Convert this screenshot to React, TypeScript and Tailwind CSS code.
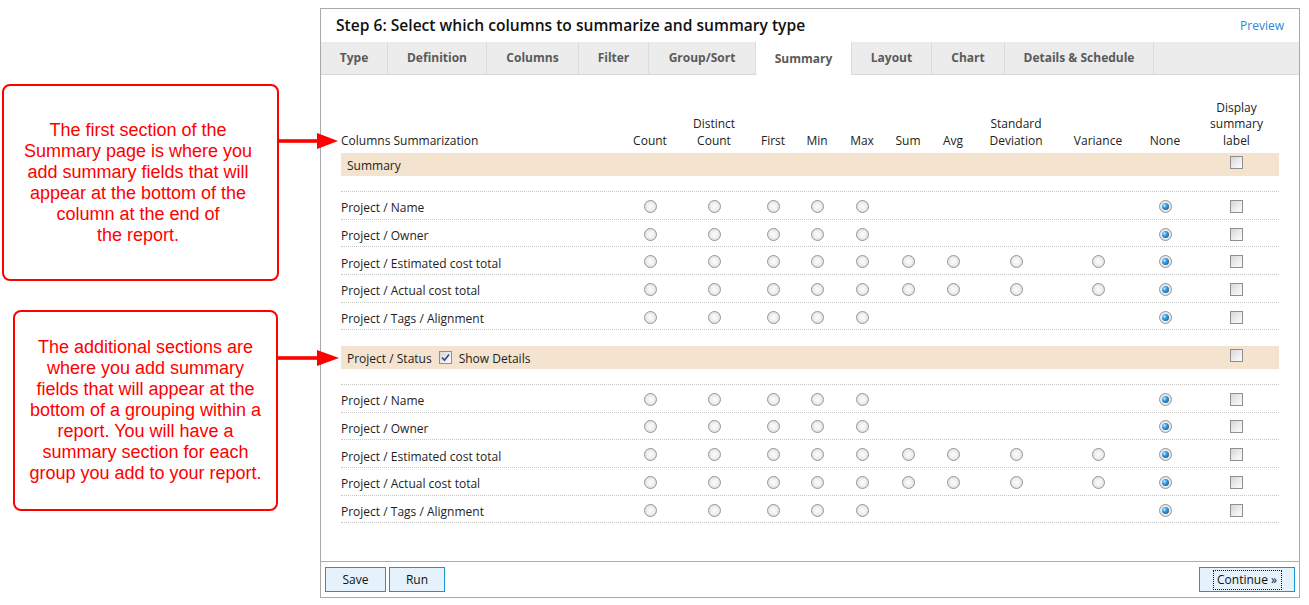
import React from "react";

const GRID =
  "grid grid-cols-[285px_48px_80px_38px_50px_40px_52px_38px_88px_76px_58px_85px]";

type RowDef = { label: string; full: boolean };

const ROWS: RowDef[] = [
  { label: "Project / Name", full: false },
  { label: "Project / Owner", full: false },
  { label: "Project / Estimated cost total", full: true },
  { label: "Project / Actual cost total", full: true },
  { label: "Project / Tags / Alignment", full: false },
];

const TABS: { label: string; cls: string; active?: boolean }[] = [
  { label: "Type", cls: "w-[67px]" },
  { label: "Definition", cls: "w-[99px]" },
  { label: "Columns", cls: "w-[92px]" },
  { label: "Filter", cls: "w-[70px]" },
  { label: "Group/Sort", cls: "w-[107px]" },
  { label: "Summary", cls: "w-[96px]", active: true },
  { label: "Layout", cls: "w-[80px]" },
  { label: "Chart", cls: "w-[73px]" },
  { label: "Details & Schedule", cls: "w-[149px]" },
];

function Radio({ checked }: { checked?: boolean }) {
  return (
    <span className="flex h-[13px] w-[13px] items-center justify-center rounded-full border border-[#959595] bg-[radial-gradient(circle,#fdfdfd_0%,#f0f0f0_45%,#d2d2d2_100%)]">
      {checked && (
        <span className="h-[7px] w-[7px] rounded-full bg-[radial-gradient(circle_at_35%_35%,#bfe6ff_0%,#3096da_40%,#0b4a80_100%)]" />
      )}
    </span>
  );
}

function Check({ checked }: { checked?: boolean }) {
  return (
    <span className="flex h-[13px] w-[13px] items-center justify-center border border-[#8f8f8f] bg-[linear-gradient(135deg,#d6d6d6_0%,#efefef_60%,#fbfbfb_100%)]">
      {checked && (
        <svg width="11" height="11" viewBox="0 0 11 11">
          <path
            d="M2 5.5 L4.5 8.2 L9 2.5"
            fill="none"
            stroke="#3a4a94"
            strokeWidth="1.7"
          />
        </svg>
      )}
    </span>
  );
}

function DataRow({ row }: { row: RowDef }) {
  return (
    <div
      className={`${GRID} h-[27.7px] items-center border-b border-dotted border-[#c6c6c6]`}
    >
      <span className="pt-[6px]">{row.label}</span>
      {Array.from({ length: 10 }).map((_, i) => {
        const show = i < 5 || i === 9 || row.full;
        return (
          <div key={i} className="flex justify-center pt-[2px]">
            {show && <Radio checked={i === 9} />}
          </div>
        );
      })}
      <div className="flex justify-center pt-[2px]">
        <Check />
      </div>
    </div>
  );
}

function Arrow({ width, base }: { width: number; base: number }) {
  return (
    <svg width={width} height="16" viewBox={`0 0 ${width} 16`}>
      <rect x="0" y="6.2" width={base + 2} height="3.6" fill="#ff0000" />
      <polygon points={`${base},0 ${width},8 ${base},16`} fill="#ff0000" />
    </svg>
  );
}

export default function App() {
  return (
    <div className="flex h-[605px] w-[1309px] bg-white font-['Open_Sans',sans-serif] text-[12px] text-[#1e1e1e]">
      {/* Annotation column */}
      <div className="w-[320px] shrink-0 font-['Liberation_Sans',Arial,sans-serif] text-[18px] leading-[21px] text-[#ff0000]">
        <div className="relative ml-[2px] mt-[84px] flex h-[197px] w-[277px] items-center justify-center rounded-[8px] border-2 border-[#ff0000] pr-[5px] text-center">
          <p>
            The first section of the
            <br />
            Summary page is where you
            <br />
            add summary fields that will
            <br />
            appear at the bottom of the
            <br />
            column at the end of
            <br />
            the report.
          </p>
          <div className="absolute left-full top-[47px] flex">
            <Arrow width={61} base={40} />
          </div>
        </div>
        <div className="relative ml-[13px] mt-[29px] flex h-[201px] w-[265px] items-center justify-center rounded-[8px] border-2 border-[#ff0000] text-center">
          <p>
            The additional sections are
            <br />
            where you add summary
            <br />
            fields that will appear at the
            <br />
            bottom of a grouping within a
            <br />
            report. You will have a
            <br />
            summary section for each
            <br />
            group you add to your report.
          </p>
          <div className="absolute left-full top-[38px] flex">
            <Arrow width={63} base={41} />
          </div>
        </div>
      </div>

      {/* Main panel */}
      <div className="mt-[8px] flex h-[590px] w-[980px] flex-col border border-[#a9a9a9]">
        {/* Title */}
        <div className="flex h-[33px] items-center justify-between px-[15px]">
          <h1 className="text-[15.6px] font-semibold text-[#111]">
            Step 6: Select which columns to summarize and summary type
          </h1>
          <span className="text-[12px] text-[#2f86d6]">Preview</span>
        </div>

        {/* Tabs */}
        <div className="flex h-[33px] border-b border-[#d8d8d8] bg-[#ececec]">
          {TABS.map((t) => (
            <div
              key={t.label}
              className={`${t.cls} flex items-center justify-center border-r border-[#dcdcdc] text-[12px] font-bold text-[#5a5a5a] ${
                t.active ? "h-[33px] bg-white pt-[1px]" : "h-[32px]"
              }`}
            >
              {t.label}
            </div>
          ))}
        </div>

        {/* Content */}
        <div className="flex-1 px-[20px] pt-[24px]">
          <div className={`${GRID} mb-[4px] h-[50px] items-end leading-[16.5px] text-[#222]`}>
            <span>Columns Summarization</span>
            <span className="text-center">Count</span>
            <span className="text-center">
              Distinct
              <br />
              Count
            </span>
            <span className="text-center">First</span>
            <span className="text-center">Min</span>
            <span className="text-center">Max</span>
            <span className="text-center">Sum</span>
            <span className="text-center">Avg</span>
            <span className="text-center">
              Standard
              <br />
              Deviation
            </span>
            <span className="text-center">Variance</span>
            <span className="text-center">None</span>
            <span className="text-center">
              Display
              <br />
              summary
              <br />
              label
            </span>
          </div>

          {/* Section 1 */}
          <div className={`${GRID} h-[23px] items-center bg-[#f3e3cf]`}>
            <span className="col-span-11 pl-[6px] pt-[2px]">Summary</span>
            <div className="flex justify-center pb-[4px]">
              <Check />
            </div>
          </div>
          <div className="h-[16px] border-b border-dotted border-[#c6c6c6]" />
          {ROWS.map((r) => (
            <DataRow key={"a" + r.label} row={r} />
          ))}

          {/* Section 2 */}
          <div className={`${GRID} mt-[15.5px] h-[23px] items-center bg-[#f3e3cf]`}>
            <div className="col-span-11 flex items-center pl-[6px] pt-[3px]">
              <span>Project / Status</span>
              <span className="mb-[3px] ml-[7px]">
                <Check checked />
              </span>
              <span className="ml-[7px]">Show Details</span>
            </div>
            <div className="flex justify-center pb-[4px]">
              <Check />
            </div>
          </div>
          <div className="h-[16px] border-b border-dotted border-[#c6c6c6]" />
          {ROWS.map((r) => (
            <DataRow key={"b" + r.label} row={r} />
          ))}
        </div>

        {/* Footer */}
        <div className="flex h-[36px] items-center justify-between border-t border-[#a7b0ba] px-[4px]">
          <div className="flex gap-[3px]">
            <button className="h-[25px] w-[61px] border border-[#1996d4] bg-[#e5f1fb] text-[12px] text-[#111]">
              Save
            </button>
            <button className="h-[25px] w-[56px] border border-[#1996d4] bg-[#e5f1fb] text-[12px] text-[#111]">
              Run
            </button>
          </div>
          <button className="flex h-[25px] w-[96px] items-center justify-center border border-[#1996d4] bg-[#e5f1fb] text-[12px] text-[#111]">
            <span className="flex h-[20px] w-[69px] items-center justify-center border border-dotted border-[#111]">
              Continue »
            </span>
          </button>
        </div>
      </div>
    </div>
  );
}
